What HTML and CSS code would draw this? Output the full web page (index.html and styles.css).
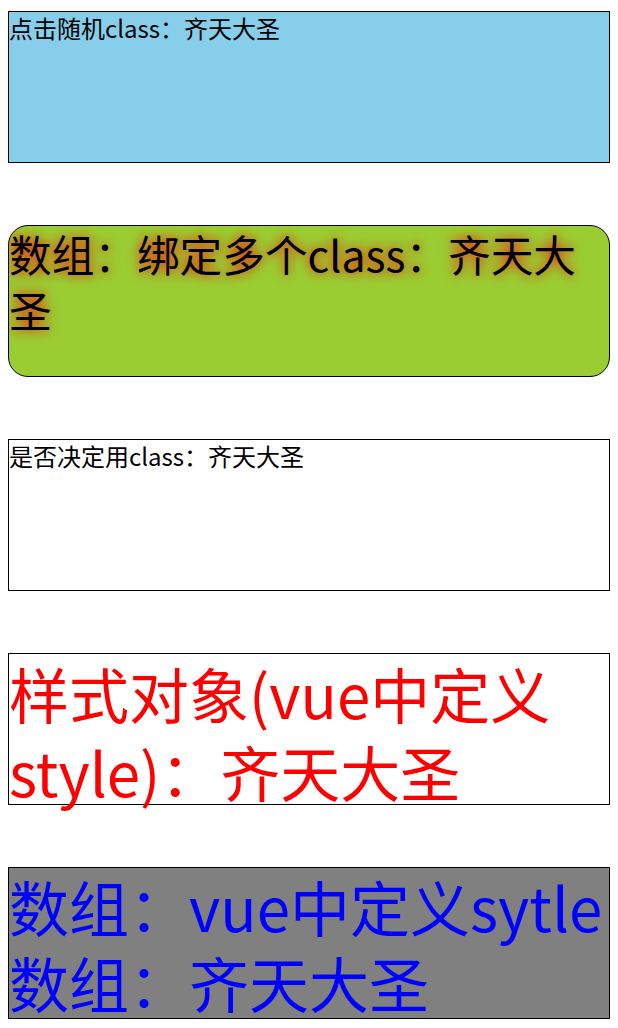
FILE: index.html
```html
<!DOCTYPE html>
<html lang="zh-CN">
<head>
<meta charset="utf-8">
<title>class 绑定</title>
<link rel="stylesheet" href="styles.css">
</head>
<body>
<div class="app">
  <div class="basic random">点击随机class：齐天大圣</div>
  <div class="basic multi">数组：绑定多个class：齐天大圣</div>
  <div class="basic">是否决定用class：齐天大圣</div>
  <div class="basic obj">样式对象(vue中定义style)：齐天大圣</div>
  <div class="basic arr">数组：vue中定义sytle数组：齐天大圣</div>
</div>
</body>
</html>
```
FILE: styles.css
```css
body {
  margin: 8px;
  font-family: "Noto Sans CJK SC", sans-serif;
}
.app {
  display: flex;
  flex-direction: column;
  gap: 62px;
  padding-top: 3px;
}
.basic {
  width: 600px;
  height: 150px;
  border: 1px solid #000;
  font-size: 24px;
  line-height: 1.32;
  box-sizing: content-box;
}
.random {
  background: #87ceeb;
}
.multi {
  background: #9acd32;
  border-radius: 20px;
  font-size: 32pt;
  line-height: 1.32;
  text-shadow: 0 0 12px red;
}
.obj {
  color: red;
  font-size: 60px;
  line-height: 1.3;
}
.arr {
  background: gray;
  color: blue;
  font-size: 60px;
  line-height: 1.27;
}
```
